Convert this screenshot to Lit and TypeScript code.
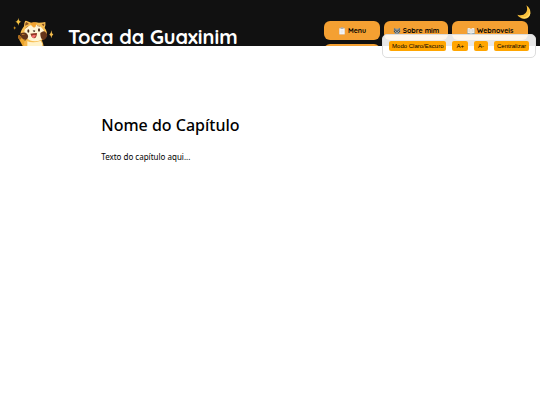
import { css, html, LitElement, svg } from "lit";
import { customElement, property, state } from "lit/decorators.js";

interface NavItem {
  icon: "clipboard" | "raccoon" | "book" | "";
  label: string;
}

const NAV_ITEMS: NavItem[] = [
  { icon: "clipboard", label: "Menu" },
  { icon: "raccoon", label: "Sobre mim" },
  { icon: "book", label: "Webnoveis" },
  { icon: "", label: "" },
];

const ICONS = {
  "": null,
  clipboard: svg`
    <rect x="3" y="2" width="18" height="21" rx="2" fill="#d6a36c" />
    <path d="M4 4h16v18H4z" fill="#f4f6f8" />
    <path d="M8 1h8v5H8z" fill="#a9b1b8" />
    <path d="M8 11h8M8 14h8M8 17h6" stroke="#d3d9dd" stroke-width="1" />
  `,
  raccoon: svg`
    <path d="M3 2l6 3h6l6-3 1 10-4 8-6 3-6-3-4-8z" fill="#8c989e" />
    <path d="M4 4l4 3-4 3zM20 4l-4 3 4 3z" fill="#4c5559" />
    <path d="M2 13l6-4 4 3 4-3 6 4-5 5-5-3-5 3z" fill="#3e474b" />
    <path d="M8 17l4-3 4 3-4 5z" fill="#e9eef0" />
    <circle cx="8" cy="13" r="1.5" fill="#fff" />
    <circle cx="16" cy="13" r="1.5" fill="#fff" />
    <circle cx="12" cy="18" r="2" fill="#20272a" />
  `,
  book: svg`
    <path d="M1 6h22v15H1z" fill="#8ca6b5" />
    <path d="M2 4q6-2 10 2 4-4 10-2v14q-6-1-10 2-4-3-10-2z" fill="#f4f1ea" />
    <path d="M12 6v14M4 8h5M4 11h5M4 14h5M15 8h5M15 11h5M15 14h5" stroke="#b1b4b5" stroke-width="1" />
  `,
};

@customElement("site-mascot")
export class SiteMascot extends LitElement {
  static override styles = css`
    :host {
      display: block;
      flex: none;
    }

    svg {
      display: block;
      width: 50px;
      height: 40px;
    }
  `;

  override render() {
    return html`
      <svg viewBox="0 0 150 120" aria-hidden="true">
        <path d="M31 17q1 11 9 12-8 1-9 12-1-11-9-12 8-1 9-12z" fill="#f8c544" />
        <path d="M130 55q1 11 6 13-5 1-6 11-1-10-6-11 5-2 6-13z" fill="#f5bd4c" />
        <path d="M20 43q1 4 4 5-3 1-4 5-1-4-4-5 3-1 4-5z" fill="#c98d20" />
        <path d="M31 78q-3-9 4-8l17 17 6 20-14-5z" fill="#eda62b" />
        <path d="M31 78q-3-9 4-8l6 8-6 7z" fill="#a8661d" />
        <path d="M50 86q22-9 47-4 12 8 10 38H43z" fill="#f5b64b" />
        <path d="M58 86q20 8 38-3l7 12-2 25H58z" fill="#fff2c9" />
        <path d="M48 43q1-18 6-17 8 2 17 7 12-4 22-1 10 0 19-2 2 10-2 18 9 11 6 23-6 13-22 17-20 6-38-1-18-7-18-22-1-8 10-22z" fill="#f7bd51" />
        <path d="M51 41q1-10 4-11 5 3 8 6-7 3-12 5zM101 36l8-1q0 5-3 8z" fill="#8b5423" />
        <path d="M50 53q10-14 25-15 20-3 33 18 4 11-2 21-8 10-23 11-17 1-26-9-10-12-7-26z" fill="#fff5d6" />
        <path d="M67 33q10-4 19 0l-3 10q-3 4-5 4-8-3-11-14z" fill="#f2a331" />
        <path d="M37 64q11-4 16-2 9 6 7 14-2 8-8 8-16-5-15-20zM97 63q8-7 12-5 8 5 9 12-3 12-13 15-9-7-8-22z" fill="#65351a" />
        <path d="M41 66q7-1 11 1-4 2-9 2z" fill="#c27f32" />
        <ellipse cx="61" cy="57" rx="3" ry="5" fill="#492819" />
        <ellipse cx="93" cy="54" rx="3" ry="5" fill="#492819" />
        <path d="M54 47l6-4M88 41l7 2" stroke="#a87030" stroke-width="2" stroke-linecap="round" />
        <path d="M74 56q4-3 8 0-2 4-4 4z" fill="#3b231c" />
        <path d="M67 65q11-2 20-2-1 17-10 16-6-2-10-14z" fill="#8d3421" />
        <path d="M70 73q6-8 14-3-3 9-8 8-4-1-6-5z" fill="#f56d6e" />
      </svg>
    `;
  }
}

@customElement("reader-toolbar")
export class ReaderToolbar extends LitElement {
  static override styles = css`
    :host {
      display: flex;
      gap: 6px;
      padding: 6px;
      border: 1px solid #dddddd;
      border-radius: 5px;
      background: rgba(255, 255, 255, 0.9);
    }

    button {
      height: 10px;
      padding: 0 3px;
      border: 0;
      border-radius: 2px;
      background: #ffa500;
      color: #000;
      font: 6px/10px "Liberation Sans", Arial, sans-serif;
      white-space: nowrap;
      cursor: pointer;
    }

    .size {
      padding: 0 4px;
    }
  `;

  private send(action: string) {
    this.dispatchEvent(new CustomEvent("action", { detail: action, bubbles: true, composed: true }));
  }

  override render() {
    return html`
      <button type="button" @click=${() => this.send("theme")}>Modo Claro/Escuro</button>
      <button class="size" type="button" @click=${() => this.send("larger")}>A+</button>
      <button class="size" type="button" @click=${() => this.send("smaller")}>A-</button>
      <button type="button" @click=${() => this.send("center")}>Centralizar</button>
    `;
  }
}

@customElement("site-header")
export class SiteHeader extends LitElement {
  static override styles = css`
    :host {
      display: flex;
      justify-content: space-between;
      box-sizing: border-box;
      height: 46px;
      padding: 12px 8px 0;
      overflow: hidden;
      background: #111;
      font-family: Quicksand, Lato, sans-serif;
    }

    .brand {
      display: flex;
      align-items: flex-start;
      gap: 10px;
    }

    h1 {
      margin: 0;
      padding-top: 15px;
      color: #fff;
      font-size: 20px;
      font-weight: 700;
      line-height: 20px;
      white-space: nowrap;
    }

    nav {
      display: grid;
      grid-template-columns: 56px 64px 76px;
      align-content: start;
      gap: 4px;
      padding: 9px 4px 0 0;
    }

    .link {
      display: flex;
      align-items: center;
      justify-content: center;
      gap: 2px;
      height: 19px;
      border-radius: 6px;
      background: #f4a032;
      color: #000;
      font-size: 7px;
      font-weight: 700;
      text-decoration: none;
      white-space: nowrap;
    }

    .link svg {
      width: 8px;
      height: 8px;
    }

    .theme {
      position: absolute;
      top: 4px;
      right: 8px;
      padding: 0;
      border: 0;
      background: none;
      cursor: pointer;
    }

    .theme svg {
      display: block;
      width: 16px;
      height: 16px;
    }
  `;

  @property({ type: Array })
  items: NavItem[] = [];

  private toggleTheme() {
    this.dispatchEvent(new CustomEvent("action", { detail: "theme", bubbles: true, composed: true }));
  }

  override render() {
    return html`
      <div class="brand">
        <site-mascot></site-mascot>
        <h1>Toca da Guaxinim</h1>
      </div>
      <nav>
        ${this.items.map(
          (item) => html`
            <a class="link" href="#">
              ${item.icon ? html`<svg viewBox="0 0 24 24" aria-hidden="true">${ICONS[item.icon]}</svg>` : null}
              <span>${item.label}</span>
            </a>
          `,
        )}
      </nav>
      <button class="theme" type="button" aria-label="Modo escuro" @click=${this.toggleTheme}>
        <svg viewBox="0 0 48 48" aria-hidden="true">
          <path d="M31 4q14 10 12 25-3 15-19 15-13-1-20-12 16 5 25-5 8-10 2-23z" fill="#fbc23c" />
          <path d="M36 10q8 12 2 21-8 12-25 9 13 7 24-1 12-11-1-29z" fill="#ffdc68" />
        </svg>
      </button>
    `;
  }
}

@customElement("app-root")
export class AppRoot extends LitElement {
  static override styles = css`
    :host {
      display: block;
      position: relative;
      min-height: 100vh;
      background: #fff;
      color: #000;
      font-family: "Noto Sans", sans-serif;
    }

    :host([dark]) {
      background: #111;
      color: #fff;
    }

    reader-toolbar {
      position: absolute;
      top: 34px;
      right: 4px;
    }

    main {
      width: 62.5%;
      margin: 0 auto;
      padding-top: 67px;
      font-size: 8px;
      line-height: 14px;
    }

    .centered {
      text-align: center;
    }

    .large {
      font-size: 12px;
    }

    h2 {
      margin: 0 0 13px;
      font-size: 16px;
      font-weight: 500;
      line-height: 24px;
    }

    p {
      margin: 0;
    }
  `;

  @property({ type: Boolean, reflect: true })
  dark = false;

  @state()
  private centered = false;

  @state()
  private large = false;

  private onAction(e: CustomEvent<string>) {
    if (e.detail === "theme") this.dark = !this.dark;
    if (e.detail === "center") this.centered = !this.centered;
    if (e.detail === "larger") this.large = true;
    if (e.detail === "smaller") this.large = false;
  }

  override render() {
    return html`
      <site-header .items=${NAV_ITEMS} @action=${this.onAction}></site-header>
      <reader-toolbar @action=${this.onAction}></reader-toolbar>
      <main class="${this.centered ? "centered" : ""} ${this.large ? "large" : ""}">
        <h2>Nome do Capítulo</h2>
        <p>Texto do capítulo aqui...</p>
      </main>
    `;
  }
}
